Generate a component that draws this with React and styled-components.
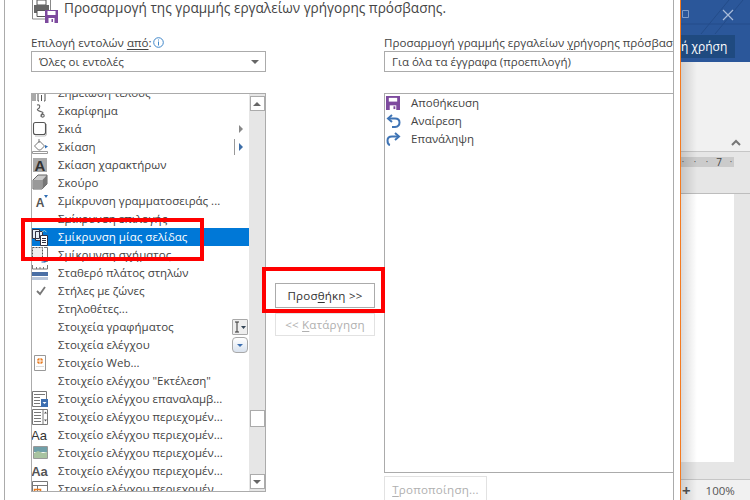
import React from 'react';
import styled, { createGlobalStyle } from 'styled-components';

const Global = createGlobalStyle`
  html, body { margin: 0; padding: 0; background: #fff; }
  body { font-family: "Open Sans", "Noto Sans", "Liberation Sans", sans-serif; }
`;

const Page = styled.div`
  position: relative;
  display: flex;
  width: 750px;
  height: 500px;
  overflow: hidden;
`;

const Dialog = styled.div`
  width: 681px;
  height: 500px;
  box-sizing: border-box;
  padding: 0 6px 0 4px;
  background: #fff;
  border-right: 1px solid #f47a20;
  flex: none;
  display: flex;
`;

const Pane = styled.div`
  flex: 1;
  min-width: 0;
  border-left: 1px solid #ababab;
  border-right: 1px solid #ababab;
  padding-left: 26px;
  overflow: hidden;
`;

const Header = styled.div`
  display: flex;
  align-items: flex-start;
  height: 23px;
  gap: 6px;
  overflow: hidden;
`;

const HeaderText = styled.span`
  font-size: 13.6px;
  line-height: 16px;
  color: #444;
  white-space: nowrap;
`;

const Columns = styled.div`
  display: grid;
  grid-template-columns: 235px 118px 1fr;
  margin-top: 11px;
`;

const Col = styled.div`
  min-width: 0;
  overflow: hidden;
`;

const Label = styled.div`
  display: flex;
  align-items: center;
  gap: 1px;
  height: 17px;
  font-size: 11.6px;
  color: #444;
  white-space: nowrap;
`;

const Select = styled.div`
  display: flex;
  align-items: center;
  justify-content: space-between;
  width: ${p => p.$wide ? '320px' : '235px'};
  height: 21px;
  box-sizing: border-box;
  border: 1px solid #ababab;
  padding: 0 6px 0 7px;
  font-size: 11.5px;
  color: #444;
  white-space: nowrap;
`;

const Caret = styled.span`
  width: 0;
  height: 0;
  border-left: 4px solid transparent;
  border-right: 4px solid transparent;
  border-top: 4px solid #666;
`;

const ListBox = styled.div`
  display: flex;
  box-sizing: border-box;
  width: ${p => p.$wide ? '320px' : '235px'};
  height: ${p => p.$wide ? '380px' : '399px'};
  margin-top: 21px;
  border: 1px solid #ababab;
  overflow: hidden;
`;

const Rows = styled.div`
  flex: 1;
  min-width: 0;
  overflow: hidden;
`;

const FirstGap = styled.div`
  margin-top: -10px;
`;

const Row = styled.div`
  position: relative;
  display: flex;
  align-items: center;
  height: 18px;
  font-size: 11.5px;
  color: ${p => p.$selected ? '#fff' : '#444'};
  background: ${p => p.$selected ? '#0078d7' : 'transparent'};
  white-space: nowrap;
`;

const IconCell = styled.span`
  width: 26px;
  height: 18px;
  flex: none;
  box-sizing: border-box;
  padding-left: ${p => p.$pad || 0}px;
  display: flex;
  align-items: center;
  justify-content: flex-start;
`;

const RowText = styled.span`
  flex: 1;
  min-width: 0;
  margin-bottom: 2px;
`;

const SubArrow = styled.span`
  width: 0;
  height: 0;
  margin-right: 6px;
  border-top: 4px solid transparent;
  border-bottom: 4px solid transparent;
  border-left: 4px solid ${p => p.$blue ? '#3d6ea8' : '#888'};
`;

const SplitLine = styled.span`
  width: 1px;
  height: 16px;
  background: #999;
  margin-right: 4px;
`;

const RowButton = styled.span`
  width: 16px;
  height: 16px;
  box-sizing: border-box;
  border: 1px solid #a9a9a9;
  border-radius: ${p => p.$round ? '4px' : '1px'};
  background: ${p => p.$round ? 'linear-gradient(#fff, #d9e2ee)' : '#eee'};
  display: flex;
  align-items: center;
  justify-content: center;
  margin-right: 1px;
`;

const Scrollbar = styled.div`
  width: 16px;
  flex: none;
  background: #e6e6e6;
  display: flex;
  flex-direction: column;
  align-items: center;
  padding: 2px 0;
  box-sizing: border-box;
`;

const ScrollBtn = styled.div`
  width: 15px;
  height: 15px;
  box-sizing: border-box;
  flex: none;
  background: #fff;
  border: 1px solid #ababab;
  display: flex;
  align-items: center;
  justify-content: center;
  margin-top: ${p => p.$bottom ? 'auto' : '0'};
`;

const Thumb = styled.div`
  width: 15px;
  height: 17px;
  box-sizing: border-box;
  background: #fff;
  border: 1px solid #ababab;
  margin-top: 299px;
`;

const Tri = styled.span`
  width: 0;
  height: 0;
  border-left: 4px solid transparent;
  border-right: 4px solid transparent;
  ${p => p.$down ? 'border-top: 4px solid #666;' : 'border-bottom: 4px solid #666;'}
`;

const Middle = styled.div`
  display: flex;
  flex-direction: column;
  align-items: center;
  gap: 5px;
  padding-top: 249px;
`;

const Button = styled.div`
  width: 100px;
  height: ${p => p.$h || 25}px;
  box-sizing: border-box;
  border: 1px solid ${p => p.$off ? '#e2e2e2' : '#ababab'};
  color: ${p => p.$off ? '#b0b0b0' : '#333'};
  background: #fff;
  font-size: 11.6px;
  letter-spacing: .2px;
  display: flex;
  align-items: center;
  justify-content: center;
  white-space: nowrap;
  flex: none;
`;

const EditButton = styled(Button)`
  width: 103px;
  height: 26px;
  margin-top: 3px;
`;

const Underline = styled.span`
  text-decoration: underline;
  text-underline-offset: 2px;
  text-decoration-thickness: 1px;
`;

const RedBox = styled.div`
  position: absolute;
  left: ${p => p.$x}px;
  top: ${p => p.$y}px;
  width: ${p => p.$w}px;
  height: ${p => p.$h}px;
  box-sizing: border-box;
  border: 4px solid #f00;
`;

const Word = styled.div`
  position: relative;
  flex: 1;
  min-width: 0;
  display: flex;
  flex-direction: column;
  background: #e6e6e6;

  &::after {
    content: "";
    position: absolute;
    left: 0;
    top: 62px;
    bottom: 0;
    width: 16px;
    background: linear-gradient(90deg, rgba(0, 0, 0, .14), rgba(0, 0, 0, 0));
  }
`;

const TitleBar = styled.div`
  position: relative;
  height: 62px;
  flex: none;
  background: #2b579a;
  overflow: hidden;
`;

const TitleArt = styled.svg`
  position: absolute;
  left: 0;
  top: 0;
`;

const Tab = styled.div`
  position: absolute;
  left: 0;
  top: 35px;
  width: 54px;
  height: 23px;
  background: #1f4a80;
  color: #fff;
  font-size: 12px;
  line-height: 23px;
  white-space: nowrap;
  text-align: right;
  padding-right: 8px;
  box-sizing: border-box;
`;

const Ribbon = styled.div`
  height: 90px;
  flex: none;
  background: #f1f1f1;
  border-bottom: 1px solid #c6c6c6;
  display: flex;
  align-items: flex-end;
  justify-content: flex-end;
  padding: 0 9px 5px 0;
  box-sizing: border-box;
`;

const Chevron = styled.svg`
  display: block;
`;

const WordBody = styled.div`
  flex: 1;
  min-height: 0;
  display: flex;
  flex-direction: column;
  background: #e6e6e6;
`;

const Ruler = styled.div`
  width: 53px;
  height: 10px;
  margin-top: 5px;
  flex: none;
  background: #cbcbcb;
  color: #444;
  display: flex;
  align-items: center;
`;

const Tick = styled.span`
  width: 12px;
  flex: none;
  text-align: center;
  font-size: ${p => p.$num ? '10px' : '9px'};
  line-height: 10px;

  &:first-child {
    margin-left: -4px;
  }
`;

const RulerGap = styled.div`
  height: 26px;
  flex: none;
  border-bottom: 1px solid #bdbdbd;
`;

const DocPage = styled.div`
  width: 53px;
  height: 268px;
  flex: none;
  background: #fff;
`;

const StatusGap = styled.div`
  height: 17px;
  flex: none;
  border-bottom: 1px solid #c6c6c6;
`;

const Status = styled.div`
  flex: 1;
  background: #f1f1f1;
  display: flex;
  align-items: center;
  padding-left: 1px;
  gap: 15px;
  font-size: 11.5px;
  color: #555;
`;

const Plus = styled.span`
  font-size: 15px;
  font-weight: 700;
  color: #555;
  line-height: 1;
`;

const Ic = ({ children }) => (
  <svg width="16" height="18" viewBox="0 0 16 18" fill="none" style={{ overflow: 'visible' }}>{children}</svg>
);

const icons = {
  endnote: <Ic><path d="M1 8v9M3 8v9M7 9H6v8h1M12 9h1v8h-1M9.500 11v6" stroke="#555" /></Ic>,
  scribble: <Ic><path d="M5 3c4-1 3 3 1 4s1 2 4 3-2 2-1 4 4 1 3-1-3 0-3 2" stroke="#666" strokeWidth="1.100" /></Ic>,
  shadow: <Ic><rect x="1.500" y="2.500" width="12" height="12" rx="2" fill="#fff" stroke="#555" strokeWidth="1.100" /><path d="M14.500 4v10q0 2-2 2H3" stroke="#bbb" /></Ic>,
  shading: <Ic><path d="M2.500 8l5-5 5 5-4 4h-2z" fill="#fff" stroke="#777" /><path d="M7 1v4" stroke="#777" /><path d="M13 7l3 1.500-3 2z" fill="#2f6eb5" /><path d="M.5 13.500h15v2H.5z" fill="#fff" stroke="#999" /></Ic>,
  charShade: <Ic><path d="M1 2h14v14H1z" fill="#aaa" /><text x="8" y="15" fontSize="15" fontWeight="700" textAnchor="middle" fill="#333" fontFamily="Liberation Sans">A</text></Ic>,
  cube: <Ic><path d="M1 6l5-5h9v9l-5 5H1z" fill="#ccc" stroke="#666" /><path d="M1.500 6h9v9h-9z" fill="#999" /><path d="M10.500 6l4.500-5v9l-4.500 5z" fill="#777" /></Ic>,
  fontSmall: <Ic><text x="8" y="15" fontSize="12" fontWeight="700" textAnchor="middle" fill="#555" fontFamily="Liberation Sans">A</text><path d="M12 3h4l-2 3z" fill="#2f6eb5" /></Ic>,
  onePage: <Ic><path d="M.5 1.500h7v9h-7zM3.500 3.500h7v9h-7z" fill="#e8eef5" stroke="#334" /><path d="M8.500 7.500h7v10h-7z" fill="#fff" stroke="#334" /><path d="M10 10.500h4M10 12.500h4M10 14.500h4" stroke="#334" /><path d="M10 4q2.500-3 4.500 0" stroke="#9cc" /></Ic>,
  shapeSmall: <Ic><path d="M.5 1.500h10v10H.5z" stroke="#555" strokeDasharray="2 1" fill="#eee" /><path d="M12 1.500h3.500v14H13" stroke="#777" /><path d="M9 13l4 3M9.500 16h4v-3" stroke="#2f6eb5" /></Ic>,
  fixedCol: <Ic><path d="M.5 1v4h15V1M4.500 3v2M8 3v2M11.500 3v2" stroke="#777" /><path d="M0 8h16v4H0z" fill="#4a6fa5" /><path d="M0 13h16v3H0z" fill="#b8c6da" /></Ic>,
  check: <Ic><path d="M5 9l3 3 5-7" stroke="#777" strokeWidth="1.800" /></Ic>,
  web: <Ic><path d="M2.500 1.500h11v15h-11z" fill="#fff" stroke="#999" /><circle cx="8" cy="7" r="3" fill="#e8791d" /><path d="M5 7h6M8 4v6" stroke="#fff" /><path d="M4 12.500h8" stroke="#ddd" /></Ic>,
  repeat: <Ic><path d="M.5 1.500h14v15H.5z" fill="#fff" stroke="#777" /><path d="M2 4.500h11M2 7.500h6M2 10.500h6M2 13.500h6" stroke="#777" /><path d="M9 9h7v8H9z" fill="#3c6eb0" /><path d="M10.500 12h4l-2 2z" fill="#fff" /></Ic>,
  combo: <Ic><path d="M.5 1.500h15v15H.5z" fill="#fff" stroke="#777" /><path d="M2 4.500h7M2 7.500h7M2 10.500h7M2 13.500h7M11 1v15" stroke="#777" /><path d="M13.500 3.500l-1.500 2h3zM13.500 13.500l-1.500-2h3z" fill="#555" /></Ic>,
  aaThin: <Ic><text x="7" y="14" fontSize="13" textAnchor="middle" fill="#333" fontFamily="Liberation Sans">Aa</text></Ic>,
  picture: <Ic><path d="M1.500 2.500h14v12h-14z" fill="#fff" stroke="#999" /><path d="M2 3h13v5H2z" fill="#6f9fa8" /><path d="M2 9l4-2 5 2 4-1v6H2z" fill="#a8c3a0" /></Ic>,
  aaBold: <Ic><text x="7.500" y="14" fontSize="13" fontWeight="700" textAnchor="middle" fill="#555" fontFamily="Liberation Sans">Aa</text></Ic>,
  gallery: <Ic><path d="M.5 1.500h15v15H.5zM.5 5.500h15M5.500 5.500v11" fill="#fff" stroke="#777" /><path d="M2.500 9.500h6v6h-6z" stroke="#e8791d" strokeWidth="1.500" /></Ic>,
};

const commands = [
  { t: 'Σημείωση τέλους', i: 'endnote' },
  { t: 'Σκαρίφημα', i: 'scribble' },
  { t: 'Σκιά', i: 'shadow', sub: 'plain' },
  { t: 'Σκίαση', i: 'shading', sub: 'split' },
  { t: 'Σκίαση χαρακτήρων', i: 'charShade' },
  { t: 'Σκούρο', i: 'cube' },
  { t: 'Σμίκρυνση γραμματοσειράς ...', i: 'fontSmall' },
  { t: 'Σμίκρυνση επιλογής' },
  { t: 'Σμίκρυνση μίας σελίδας', i: 'onePage', selected: true },
  { t: 'Σμίκρυνση σχήματος', i: 'shapeSmall' },
  { t: 'Σταθερό πλάτος στηλών', i: 'fixedCol' },
  { t: 'Στήλες με ζώνες', i: 'check' },
  { t: 'Στηλοθέτες...' },
  { t: 'Στοιχεία γραφήματος', btn: 'cursor' },
  { t: 'Στοιχεία ελέγχου', btn: 'round' },
  { t: 'Στοιχείο Web...', i: 'web' },
  { t: 'Στοιχείο ελέγχου "Εκτέλεση"' },
  { t: 'Στοιχείο ελέγχου επαναλαμβ...', i: 'repeat' },
  { t: 'Στοιχείο ελέγχου περιεχομέν...', i: 'combo' },
  { t: 'Στοιχείο ελέγχου περιεχομέν...', i: 'aaThin' },
  { t: 'Στοιχείο ελέγχου περιεχομέν...', i: 'picture' },
  { t: 'Στοιχείο ελέγχου περιεχομέν...', i: 'aaBold' },
  { t: 'Στοιχείο ελέγχου περιεχομέν...', i: 'gallery' },
];

function CommandRow({ c }) {
  return (
    <Row $selected={c.selected}>
      <IconCell>{c.i && icons[c.i]}</IconCell>
      <RowText>{c.t}</RowText>
      {c.sub === 'plain' && <SubArrow />}
      {c.sub === 'split' && <><SplitLine /><SubArrow $blue /></>}
      {c.btn === 'cursor' && (
        <RowButton>
          <svg width="14" height="14" viewBox="0 0 14 14" fill="none">
            <path d="M2 2h4M2 12h4M4 2v10" stroke="#333" />
            <path d="M8 6h5l-2.500 3z" fill="#345" />
          </svg>
        </RowButton>
      )}
      {c.btn === 'round' && (
        <RowButton $round>
          <svg width="8" height="5" viewBox="0 0 8 5"><path d="M1 1h6L4 4z" fill="#3c6eb0" /></svg>
        </RowButton>
      )}
    </Row>
  );
}

const toolbarItems = [
  {
    t: 'Αποθήκευση',
    icon: <svg width="14" height="14" viewBox="0 0 15 15"><path d="M0 0h15v15H0z" fill="#7d4a9e" /><path d="M3 2h9v4H3z" fill="#fff" /><path d="M4 10h7v5H4z" fill="#fff" /><path d="M8 11h2v3H8z" fill="#7d4a9e" /></svg>,
  },
  {
    t: 'Αναίρεση',
    icon: <svg width="15" height="14" viewBox="0 0 15 14" fill="none"><path d="M6 1L2 4.500 6 8" stroke="#3f74b5" strokeWidth="2" /><path d="M2.500 4.500H9q4.500 0 4.500 4T9 13H6" stroke="#3f74b5" strokeWidth="2" /></svg>,
  },
  {
    t: 'Επανάληψη',
    icon: <svg width="15" height="14" viewBox="0 0 15 14" fill="none"><path d="M9 1l4 3.500L9 8" stroke="#3f74b5" strokeWidth="2" /><path d="M12.500 4.500H6q-4.500 0-4.500 4T4 13" stroke="#3f74b5" strokeWidth="2" /></svg>,
  },
];

export default function App() {
  return (
    <Page>
      <Global />
      <Dialog>
        <Pane>
          <Header>
            <svg width="27" height="23" viewBox="0 0 27 23" fill="none">
              <path d="M1.500 -2h18v21h-18z" stroke="#888" fill="#fff" />
              <path d="M6 0h9v5H6z" fill="#fff" stroke="#555" />
              <path d="M3 5h15v8H3z" fill="#666" />
              <path d="M6 10.500h9v6H6z" fill="#fff" stroke="#555" />
              <path d="M14 10h13v13H14z" fill="#7d4a9e" />
              <path d="M16.500 11h8v4h-8zM17.500 18h6v5h-6z" fill="#fff" />
              <path d="M20.500 19h1.500v3h-1.500z" fill="#7d4a9e" />
            </svg>
            <HeaderText>Προσαρμογή της γραμμής εργαλείων γρήγορης πρόσβασης.</HeaderText>
          </Header>
          <Columns>
            <Col>
              <Label>
                <span>Επιλογή εντολών <Underline>από</Underline>:</span>
                <svg width="11" height="11" viewBox="0 0 11 11" fill="none">
                  <circle cx="5.500" cy="5.500" r="4.800" stroke="#3f86c9" />
                  <path d="M5.500 4.500v4M5.500 2.500v1" stroke="#3f86c9" />
                </svg>
              </Label>
              <Select>Όλες οι εντολές<Caret /></Select>
              <ListBox>
                <Rows>
                  <FirstGap />
                  {commands.map((c, i) => <CommandRow key={i} c={c} />)}
                </Rows>
                <Scrollbar>
                  <ScrollBtn><Tri /></ScrollBtn>
                  <Thumb />
                  <ScrollBtn $bottom><Tri $down /></ScrollBtn>
                </Scrollbar>
              </ListBox>
            </Col>
            <Middle>
              <Button><span>Προσ<Underline>θ</Underline>ήκη &gt;&gt;</span></Button>
              <Button $off $h={23}><span>&lt;&lt; <Underline>Κ</Underline>ατάργηση</span></Button>
            </Middle>
            <Col>
              <Label><span>Προσαρμογή γραμμής εργαλείων <Underline>γ</Underline>ρήγορης πρόσβασης:</span></Label>
              <Select $wide>Για όλα τα έγγραφα (προεπιλογή)</Select>
              <ListBox $wide>
                <Rows>
                  {toolbarItems.map(item => (
                    <Row key={item.t}>
                      <IconCell $pad={1}>{item.icon}</IconCell>
                      <RowText>{item.t}</RowText>
                    </Row>
                  ))}
                </Rows>
              </ListBox>
              <EditButton $off><span><Underline>Τ</Underline>ροποποίηση...</span></EditButton>
            </Col>
          </Columns>
        </Pane>
      </Dialog>
      <Word>
        <TitleBar>
          <TitleArt width="69" height="62" viewBox="0 0 69 62" fill="none">
            <path d="M20 34L48 0M34 34L62 0M0 24h69" stroke="#244c8a" />
            <path d="M1.500 10.500h6v7h-6z" stroke="#7f9cc8" />
            <path d="M42 10l10 10M52 10L42 20" stroke="#a9bcd9" strokeWidth="1.200" />
          </TitleArt>
          <Tab>ή χρήση</Tab>
        </TitleBar>
        <Ribbon>
          <Chevron width="10" height="7" viewBox="0 0 10 7" fill="none">
            <path d="M1 6l4-4 4 4" stroke="#777" strokeWidth="2" />
          </Chevron>
        </Ribbon>
        <WordBody>
          <Ruler>
            <Tick>·</Tick><Tick>·</Tick><Tick>·</Tick><Tick $num>7</Tick><Tick>·</Tick>
          </Ruler>
          <RulerGap />
          <DocPage />
          <StatusGap />
          <Status><Plus>+</Plus>100%</Status>
        </WordBody>
      </Word>
      <RedBox $x={21} $y={218} $w={183} $h={43} />
      <RedBox $x={262} $y={267} $w={123} $h={46} />
    </Page>
  );
}
